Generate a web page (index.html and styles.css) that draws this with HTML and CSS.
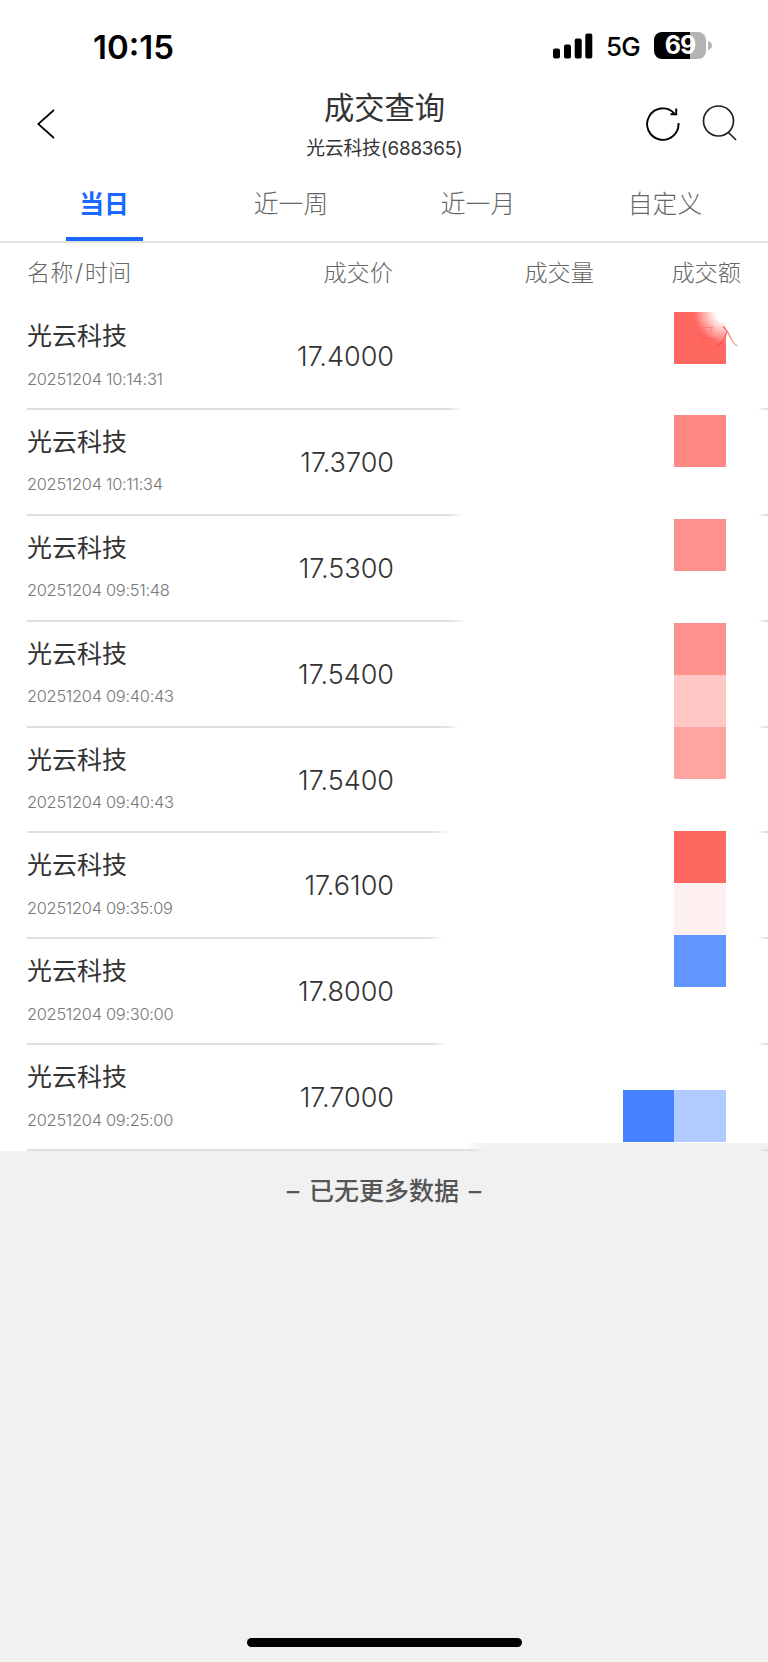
FILE: index.html
```html
<!DOCTYPE html>
<html lang="zh-CN">
<head>
<meta charset="utf-8">
<title>成交查询</title>
<link rel="stylesheet" href="styles.css">
</head>
<body>
<div class="status">
  <span class="clock">10:15</span>
  <svg class="signal" width="40" height="26" viewBox="0 0 40 26"><rect x="0" y="15.5" width="7" height="10" rx="2"/><rect x="11" y="11.5" width="7" height="14" rx="2"/><rect x="21.7" y="5.5" width="7" height="20" rx="2"/><rect x="32.3" y="0.5" width="7" height="25" rx="2"/></svg>
  <span class="net">5G</span>
  <div class="battery"><span>69</span></div>
  <svg class="nub" width="4" height="9" viewBox="0 0 4 9"><path d="M0 0Q4 1.5 4 4.5T0 9Z" fill="#b3b3b3"/></svg>
</div>
<header class="nav">
  <svg class="back" width="18" height="30" viewBox="0 0 18 30"><path d="M17 1L1.2 15L17 29"/></svg>
  <div class="titles"><h1>成交查询</h1><p>光云科技(688365)</p></div>
  <svg class="refresh" width="36" height="36" viewBox="0 0 36 36"><path d="M33.5 17A15.7 15.7 0 1 1 29.2 7.3M31.2 2.5V8.2H25.5"/></svg>
  <svg class="search" width="36" height="38" viewBox="0 0 36 38"><circle cx="16.5" cy="17" r="15"/><path d="M26 28L34 36"/></svg>
</header>
<nav class="tabs">
  <div class="tab active">当日</div><div class="tab">近一周</div><div class="tab">近一月</div><div class="tab">自定义</div>
</nav>
<main class="list">
  <div class="head"><span>名称<em>/</em>时间</span><span>成交价</span><span>成交量</span><span>成交额</span></div>
  <div class="row" style="--cut:448px"><div><h2>光云科技</h2><time>20251204 10:14:31</time></div><b>17.4000</b><span class="side">买入</span></div>
  <div class="row" style="--cut:448px"><div><h2>光云科技</h2><time>20251204 10:11:34</time></div><b>17.3700</b></div>
  <div class="row" style="--cut:450px"><div><h2>光云科技</h2><time>20251204 09:51:48</time></div><b>17.5300</b></div>
  <div class="row" style="--cut:444px"><div><h2>光云科技</h2><time>20251204 09:40:43</time></div><b>17.5400</b></div>
  <div class="row" style="--cut:432px"><div><h2>光云科技</h2><time>20251204 09:40:43</time></div><b>17.5400</b></div>
  <div class="row" style="--cut:427px"><div><h2>光云科技</h2><time>20251204 09:35:09</time></div><b>17.6100</b></div>
  <div class="row" style="--cut:432px"><div><h2>光云科技</h2><time>20251204 09:30:00</time></div><b>17.8000</b></div>
  <div class="row last" style="--cut:470px"><div><h2>光云科技</h2><time>20251204 09:25:00</time></div><b>17.7000</b></div>
  <div class="mosaic">
    <i class="r1"></i><i class="r2"></i><i class="r3"></i><i class="r4"></i><i class="r5"></i><i class="r6"></i><i class="r7"></i><i class="r8"></i><i class="b1"></i><i class="b2"></i><i class="b3"></i>
  </div>
</main>
<footer class="foot"><p>– 已无更多数据 –</p><div class="home"></div></footer>
</body>
</html>
```
FILE: styles.css
```css
* { box-sizing: border-box; }
body { margin: 0; width: 768px; height: 1662px; display: flex; flex-direction: column; background: #f1f1f1; color: #333; font-family: Inter, "Noto Sans CJK SC", sans-serif; overflow: hidden; }
h1, h2, p { margin: 0; font-weight: 400; }
.status { height: 91px; background: #fff; display: flex; align-items: center; color: #000; padding-left: 93px; }
.clock { font-size: 33px; font-weight: 600; width: 460px; line-height: 40px; padding-top: 2px; }
.net { font-size: 26px; font-weight: 500; width: 48px; margin-left: 13px; line-height: 32px; letter-spacing: -.8px; padding-top: 3px; }
.battery { width: 52px; height: 27px; border-radius: 8px; background: linear-gradient(90deg, #000 70%, #b3b3b3 70%); color: #fff; font-size: 25px; font-weight: 700; line-height: 27px; text-align: center; letter-spacing: -1px; }
.nub { margin-left: 2px; }
.nav { height: 79px; background: #fff; display: flex; padding-left: 37px; }
.nav svg { fill: none; stroke: #222; stroke-width: 1.7; }
.nav .back { margin-top: 18px; stroke: #000; }
.titles { width: 586px; text-align: center; padding-left: 73px; margin-right: 4px; }
.titles h1 { font-size: 30.3px; line-height: 34px; }
.titles p { font-size: 18.8px; line-height: 24px; margin-top: 12px; letter-spacing: -.15px; }
.nav .refresh { margin-top: 15px; stroke: #000; stroke-width: 1.9; }
.nav .search { margin: 13px 0 0 21px; }
.tabs { height: 73px; background: #fff; border-bottom: 2px solid #e3e3e3; display: grid; grid-template-columns: repeat(4, 187px); padding-left: 10.5px; }
.tab { font-size: 24.8px; font-weight: 300; color: #666; text-align: center; line-height: 69px; height: 71px; }
.tab.active { color: #1a69ff; font-weight: 700; }
.tab.active::after { content: ""; display: block; width: 77px; height: 4px; margin: -2px auto 0; background: #1a69ff; }
.list { position: relative; background: #fff; height: 907.5px; }
.head { height: 60px; display: grid; grid-template-columns: 165px 201px 201px 147px; padding-left: 27px; color: #666; font-weight: 300; font-size: 23.2px; line-height: 61px; text-align: right; }
.head span:first-child { text-align: left; }
.head em { font-style: normal; margin: 0 1.7px; }
.row { position: relative; height: 105.9px; padding-left: 27px; display: flex; }
.row::after { content: ""; position: absolute; left: 27px; right: 0; bottom: -1px; height: 2px; background: linear-gradient(90deg, #dfdfdf calc(var(--cut) - 27px), transparent calc(var(--cut) - 11px), transparent 730px, #ddd 741px); }
.row > div { width: 200px; }
.row h2 { font-size: 25px; line-height: 32px; padding-top: 17px; }
.row time { display: block; font-size: 16.4px; font-weight: 300; color: #777; line-height: 20px; margin-top: 16.5px; letter-spacing: -.28px; }
.row b { width: 167px; text-align: right; font-size: 27px; font-weight: 350; line-height: 32px; padding-top: 38px; }
.side { color: #ff4a43; font-weight: 300; font-size: 24px; line-height: 32px; padding-top: 18px; margin-left: 297px; width: 52px; -webkit-mask-image: linear-gradient(90deg, transparent 8%, rgba(0,0,0,.45) 40%, #000 58%, rgba(0,0,0,.35) 92%); position: relative; z-index: 2; }
.last::before { content: ""; position: absolute; left: 465px; right: 0; bottom: -2px; height: 9px; background: linear-gradient(90deg, transparent, #f1f1f1 20px); }
.mosaic { position: absolute; left: 622.5px; top: 68.6px; display: grid; grid-template-columns: repeat(2, 51.8px); grid-template-rows: repeat(16, 51.93px); }
.mosaic i { grid-column: 2; }
.r1 { grid-row: 1; background: radial-gradient(circle at 100% 0, #fff 10px, #ff6761 32px); }
.r2 { grid-row: 3; background: #ff8883; }
.r3 { grid-row: 5; background: #ff918c; }
.r4 { grid-row: 7; background: #ff918c; }
.r5 { grid-row: 8; background: #ffc8c6; }
.r6 { grid-row: 9; background: #ffa4a1; }
.r7 { grid-row: 11; background: #ff6761; }
.r8 { grid-row: 12; background: #fff1f0; }
.b1 { grid-row: 13; background: #6195ff; }
.mosaic .b2 { grid-row: 16; grid-column: 1; background: #4682ff; }
.b3 { grid-row: 16; background: #b1caff; }
.foot { flex: 1; display: flex; flex-direction: column; justify-content: space-between; align-items: center; color: #555; }
.foot p { font-size: 25px; font-weight: 500; line-height: 32px; margin-top: 24px; word-spacing: 3px; }
.home { width: 275px; height: 9px; border-radius: 5px; background: #000; margin-bottom: 15px; }
```
